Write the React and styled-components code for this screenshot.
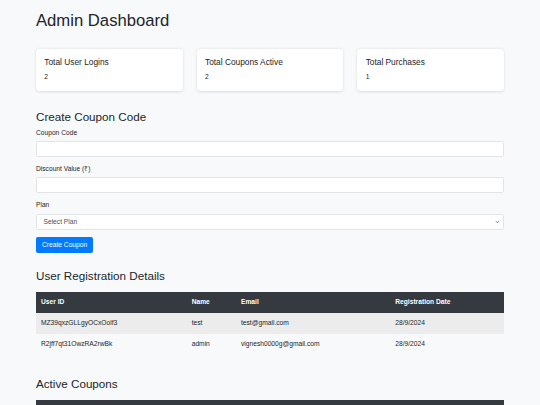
import React from 'react'
import styled, { createGlobalStyle } from 'styled-components'

const GlobalStyle = createGlobalStyle`
  html, body {
    margin: 0;
    padding: 0;
    background: #f8f9fa;
  }
  body {
    font-family: "Liberation Sans", Arial, Helvetica, sans-serif;
    color: #212529;
    font-size: 6.67px;
    line-height: 1.5;
  }
  * { box-sizing: border-box; }
`

const Container = styled.div`
  width: 468px;
  margin: 0 auto;
  padding: 11px 0 20px;
`

const Title = styled.h1`
  margin: 0 0 18px;
  font-size: 16.67px;
  line-height: 20px;
  font-weight: 400;
`

const Stats = styled.div`
  display: grid;
  grid-template-columns: repeat(3, 1fr);
  gap: 14px;
`

const Card = styled.div`
  background: #fff;
  border-radius: 4px;
  box-shadow: 0 0.5px 3px rgba(0, 0, 0, 0.12);
  padding: 8.33px;
`

const CardTitle = styled.h5`
  margin: 0 0 5px;
  font-size: 8.33px;
  line-height: 10px;
  font-weight: 400;
`

const CardValue = styled.p`
  margin: 0;
  font-size: 6.67px;
  line-height: 10px;
`

const Heading = styled.h3`
  margin: ${(p) => p.$top}px 0 ${(p) => p.$bottom}px;
  font-size: 11.67px;
  line-height: 14px;
  font-weight: 400;
`

const Group = styled.div`
  margin-bottom: 7.3px;
`

const Label = styled.label`
  display: block;
  margin-bottom: 3.33px;
  font-size: 6.67px;
  line-height: 10px;
`

const Input = styled.input`
  display: block;
  width: 100%;
  height: 15.83px;
  padding: 0 5px;
  font: inherit;
  background: #fff;
  border: 1px solid #e2e5e8;
  border-radius: 1.67px;
  outline: none;
`

const SelectBox = styled.div`
  position: relative;
  height: 15.83px;
  display: flex;
  align-items: center;
  padding: 0 5px 0 6.5px;
  background: #fff;
  border: 1px solid #e2e5e8;
  border-radius: 1.67px;
  color: #495057;
  font-size: 6.67px;
`

const Arrow = styled.svg`
  position: absolute;
  right: 3px;
  top: 50%;
  transform: translateY(-50%);
`

const Button = styled.button`
  display: inline-block;
  height: 15.83px;
  padding: 0 5px;
  font: inherit;
  font-size: 6.67px;
  color: #fff;
  background: #007bff;
  border: 1px solid #007bff;
  border-radius: 1.67px;
`

const Table = styled.table`
  width: 100%;
  border-collapse: collapse;
  table-layout: fixed;
  margin-bottom: 6.67px;
`

const HeadRow = styled.tr`
  height: 21px;
  background: #343a40;
`

const Th = styled.th`
  text-align: left;
  padding: 0 5px;
  font-size: 6.67px;
  line-height: 10px;
  font-weight: 700;
  color: #fff;
`

const Row = styled.tr`
  height: 21px;
  background: ${(p) => (p.$striped ? '#ececec' : 'transparent')};
`

const Td = styled.td`
  padding: 0 5px;
  font-size: 6.67px;
  line-height: 10px;
  white-space: nowrap;
  overflow: hidden;
`

const stats = [
  { title: 'Total User Logins', value: 2 },
  { title: 'Total Coupons Active', value: 2 },
  { title: 'Total Purchases', value: 1 },
]

const users = [
  { id: 'MZ39qxzGLLgyOCxOolf3', name: 'test', email: 'test@gmail.com', date: '28/9/2024' },
  { id: 'R2jff7qt31OwzRA2rwBk', name: 'admin', email: 'vignesh0000g@gmail.com', date: '28/9/2024' },
]

const coupons = [
  { code: 'WELCOME10', discount: '₹10', plan: 'Basic' },
  { code: 'SAVE50', discount: '₹50', plan: 'Premium' },
]

export default function App() {
  return (
    <>
      <GlobalStyle />
      <Container>
        <Title>Admin Dashboard</Title>

        <Stats>
          {stats.map((s) => (
            <Card key={s.title}>
              <CardTitle>{s.title}</CardTitle>
              <CardValue>{s.value}</CardValue>
            </Card>
          ))}
        </Stats>

        <Heading $top={19.6} $bottom={3.33}>Create Coupon Code</Heading>
        <form onSubmit={(e) => e.preventDefault()}>
          <Group>
            <Label>Coupon Code</Label>
            <Input type="text" />
          </Group>
          <Group>
            <Label>Discount Value (₹)</Label>
            <Input type="number" />
          </Group>
          <Group>
            <Label>Plan</Label>
            <SelectBox>
              Select Plan
              <Arrow width="5" height="5" viewBox="0 0 10 10">
                <path d="M2 3.5 L5 6.5 L8 3.5" fill="none" stroke="#555" strokeWidth="1.6" />
              </Arrow>
            </SelectBox>
          </Group>
          <Button type="submit">Create Coupon</Button>
        </form>

        <Heading $top={16.7} $bottom={8.3}>User Registration Details</Heading>
        <Table>
          <colgroup>
            <col style={{ width: '150.7px' }} />
            <col style={{ width: '49.3px' }} />
            <col style={{ width: '154.3px' }} />
            <col />
          </colgroup>
          <thead>
            <HeadRow>
              <Th>User ID</Th>
              <Th>Name</Th>
              <Th>Email</Th>
              <Th>Registration Date</Th>
            </HeadRow>
          </thead>
          <tbody>
            {users.map((u, i) => (
              <Row key={u.id} $striped={i % 2 === 0}>
                <Td>{u.id}</Td>
                <Td>{u.name}</Td>
                <Td>{u.email}</Td>
                <Td>{u.date}</Td>
              </Row>
            ))}
          </tbody>
        </Table>

        <Heading $top={22.5} $bottom={8.8}>Active Coupons</Heading>
        <Table>
          <thead>
            <HeadRow>
              <Th>Coupon Code</Th>
              <Th>Discount</Th>
              <Th>Plan</Th>
            </HeadRow>
          </thead>
          <tbody>
            {coupons.map((c, i) => (
              <Row key={c.code} $striped={i % 2 === 0}>
                <Td>{c.code}</Td>
                <Td>{c.discount}</Td>
                <Td>{c.plan}</Td>
              </Row>
            ))}
          </tbody>
        </Table>
      </Container>
    </>
  )
}
